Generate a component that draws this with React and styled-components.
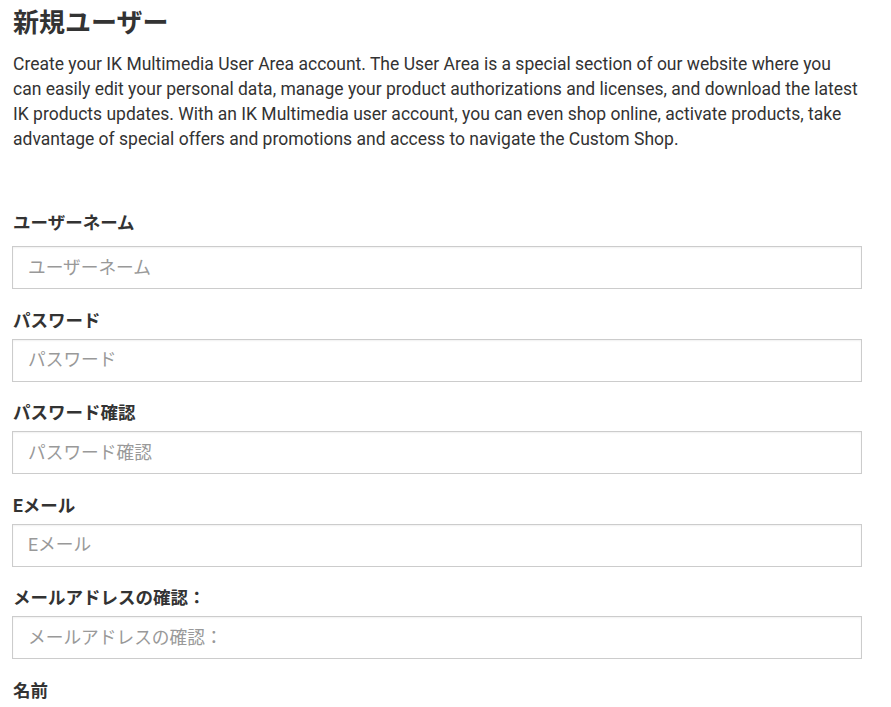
import React from 'react';
import styled, { createGlobalStyle } from 'styled-components';

const GlobalStyle = createGlobalStyle`
    body {
        margin: 0;
        background: #fff;
        font-family: Roboto, "Noto Sans CJK JP", sans-serif;
        color: #333;
    }
`;

const Page = styled.div`
    width: 850px;
    padding: 0 0 0 12px;
`;

const Title = styled.h1`
    margin: 6px 0 0 1px;
    font-size: 26px;
    line-height: 34px;
    font-weight: 700;
    color: #333;
`;

const Intro = styled.p`
    margin: 11.5px 0 0 1px;
    font-size: 17.5px;
    line-height: 25px;
    color: #333;
`;

const Form = styled.form`
    margin-top: 59.5px;
    display: flex;
    flex-direction: column;
`;

const Field = styled.div`
    display: flex;
    flex-direction: column;
    margin-bottom: 19.5px;
`;

const Label = styled.label`
    margin: 0 0 ${props => props.$first ? '11px' : '6px'} 1px;
    font-size: 17.5px;
    line-height: 24px;
    font-weight: 700;
    color: #333;
`;

const Input = styled.input`
    box-sizing: border-box;
    width: 850px;
    height: 43px;
    padding: 0 15px;
    border: 1px solid #ccc;
    border-radius: 0;
    box-shadow: inset 0 1px 2px rgba(0, 0, 0, 0.06);
    font-family: Roboto, "Noto Sans CJK JP", sans-serif;
    font-size: 17.7px;
    color: #333;
    outline: none;

    &::placeholder {
        color: #999;
    }
`;

const fields = [
    { name: 'username', label: 'ユーザーネーム', type: 'text' },
    { name: 'password', label: 'パスワード', type: 'password' },
    { name: 'password2', label: 'パスワード確認', type: 'password' },
    { name: 'email', label: 'Eメール', type: 'email' },
    { name: 'email2', label: 'メールアドレスの確認：', type: 'email' },
    { name: 'name', label: '名前', type: 'text' },
];

export default function App() {
    return (
        <Page>
            <GlobalStyle />
            <Title>新規ユーザー</Title>
            <Intro>
                Create your IK Multimedia User Area account. The User Area is a special section of our website where you
                can easily edit your personal data, manage your product authorizations and licenses, and download the latest
                IK products updates. With an IK Multimedia user account, you can even shop online, activate products, take
                advantage of special offers and promotions and access to navigate the Custom Shop.
            </Intro>
            <Form>
                {fields.map((f, i) => (
                    <Field key={f.name}>
                        <Label htmlFor={f.name} $first={i === 0}>{f.label}</Label>
                        <Input id={f.name} name={f.name} type={f.type} placeholder={f.label} />
                    </Field>
                ))}
            </Form>
        </Page>
    );
}
